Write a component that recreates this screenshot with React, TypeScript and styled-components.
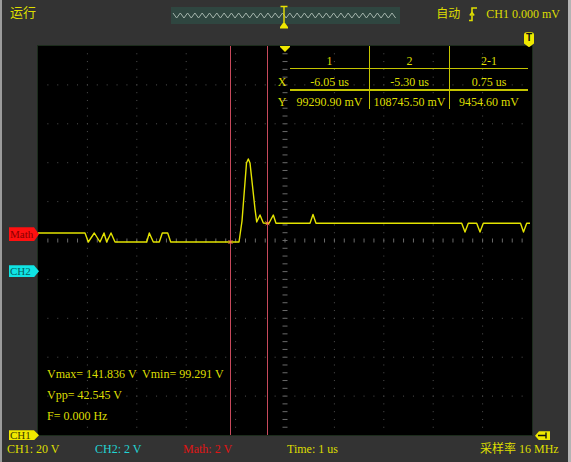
import React from 'react';
import styled, { createGlobalStyle } from 'styled-components';

const YELLOW = '#dede00';
const LINE_YELLOW = '#c4c400';
const CYAN = '#22d4d4';
const RED = '#e01414';
const SERIF = `'Liberation Serif', 'Noto Sans CJK SC', serif`;

const GlobalStyle = createGlobalStyle`
  html, body {
    margin: 0;
    padding: 0;
    background: #333333;
  }
`;

const Frame = styled.div`
  box-sizing: border-box;
  width: 571px;
  height: 462px;
  display: flex;
  flex-direction: column;
  background: #333333;
  border-left: 2px solid #9c9c9c;
  border-right: 3px solid #b4b4b4;
  font-family: ${SERIF};
  font-size: 12px;
  overflow: hidden;
`;

const TopBar = styled.div`
  height: 28px;
  display: grid;
  grid-template-columns: 169px 229px 1fr;
  align-items: start;
`;

const RunState = styled.div`
  padding: 5px 0 0 8px;
  font-size: 13px;
  line-height: 15px;
  color: ${YELLOW};
`;

const TimebaseStrip = styled.div`
  position: relative;
  margin-top: 7px;
  height: 17px;
  background: #2f4640;
`;

const StripMarker = styled.svg`
  position: absolute;
  left: 108px;
  top: -1px;
  overflow: visible;
`;

const TriggerInfo = styled.div`
  display: flex;
  justify-content: flex-end;
  align-items: center;
  gap: 8px;
  padding: 6px 8px 0 0;
  line-height: 14px;
  color: ${YELLOW};
`;

const MarkerStrip = styled.div`
  height: 19px;
  display: flex;
  justify-content: flex-end;
  align-items: flex-end;
  padding-right: 34px;
`;

const TopTrigMarker = styled.div`
  width: 10px;
  height: 15px;
  margin-bottom: -1px;
  position: relative;
  z-index: 2;
  background: #f0e800;
  border-radius: 3px 3px 0 0;
  clip-path: polygon(0 0, 100% 0, 100% 75%, 50% 100%, 0 75%);
  color: #111;
  font-family: 'Liberation Sans', sans-serif;
  font-weight: bold;
  font-size: 10px;
  line-height: 12px;
  text-align: center;
`;

const Middle = styled.div`
  display: flex;
  height: 389px;
`;

const Gutter = styled.div`
  position: relative;
  width: 36px;
  flex: none;
`;

const Tag = styled.div<{ $bg: string; $fg: string; $top: number; $h: number }>`
  position: absolute;
  left: 7px;
  top: ${(p) => p.$top}px;
  width: 29px;
  height: ${(p) => p.$h}px;
  background: ${(p) => p.$bg};
  color: ${(p) => p.$fg};
  clip-path: polygon(0 0, calc(100% - 5px) 0, 100% 50%, calc(100% - 5px) 100%, 0 100%);
  font-size: 11px;
  line-height: ${(p) => p.$h}px;
  padding-left: 1px;
  z-index: 2;
`;

const LevelMarker = styled.div`
  position: absolute;
  left: 3px;
  top: 385px;
  width: 15px;
  height: 9px;
  background: #f0e800;
  clip-path: polygon(4px 0, 100% 0, 100% 100%, 4px 100%, 0 50%);
  display: flex;
  align-items: center;
  justify-content: center;
  z-index: 2;
`;

const Screen = styled.div`
  position: relative;
  width: 494px;
  height: 389px;
  flex: none;
  background: #000;
  box-shadow: 0 0 0 1px #1c2c1c;
`;

const ScreenSvg = styled.svg`
  position: absolute;
  inset: 0;
  display: block;
`;

const CursorTable = styled.div`
  position: absolute;
  left: 236px;
  top: 0;
  display: grid;
  grid-template-columns: 16px 79px 80px 79px;
  grid-template-rows: 22px 21px 20px;
  color: ${YELLOW};
  line-height: 14px;
`;

const Cell = styled.div<{ $top?: number; $divider?: boolean }>`
  display: flex;
  align-items: flex-end;
  justify-content: center;
  white-space: nowrap;
  border-top: ${(p) => (p.$top ? `${p.$top}px solid ${LINE_YELLOW}` : 'none')};
  border-left: ${(p) => (p.$divider ? `1px solid ${LINE_YELLOW}` : 'none')};
`;

const Measurements = styled.div`
  position: absolute;
  left: 9px;
  bottom: 8px;
  color: ${YELLOW};
  line-height: 21px;
  white-space: pre;
`;

const StatusBar = styled.div`
  height: 26px;
  display: flex;
  align-items: center;
  padding: 0 8px 0 5px;
  line-height: 14px;
  margin-top: 1px;
`;

const StatusItem = styled.div<{ $color: string; $w?: number }>`
  color: ${(p) => p.$color};
  width: ${(p) => (p.$w ? `${p.$w}px` : 'auto')};
  flex: ${(p) => (p.$w ? 'none' : '1')};
  white-space: nowrap;
`;

const W = 494;
const H = 389;
const OX = 38;
const OY = 47;

const wavePage: [number, number][] = [
  [38, 234], [85, 234], [88.3, 243], [94.3, 234], [100, 243], [104, 234], [106.7, 243],
  [111, 234], [115, 243], [146.7, 243], [149.3, 234], [153.3, 243], [159.3, 243],
  [162.3, 234], [167.7, 234], [170.7, 243], [239, 243], [242, 222], [246.5, 164],
  [248.3, 160], [250, 164], [255, 210], [256.7, 223], [260, 216], [263.3, 224],
  [269, 224.3], [273.3, 216], [276, 224.3], [310, 224.3], [313, 215.5], [316, 224.3],
  [461.7, 224.3], [465, 233], [468.3, 224.3], [476.7, 224.3], [480, 233], [483.3, 224.3],
  [520.5, 224.3], [523.5, 233], [526.7, 224.3], [530, 224.3],
];

const wave = wavePage.map(([x, y]) => `${x - OX},${y - OY}`).join(' ');

const Graticule = () => {
  const dx = W / 10;
  const dy = H / 10;
  const items: React.ReactElement[] = [];
  for (let i = 1; i < 10; i++) {
    const x = i * dx;
    for (let j = 1; j < 50; j++) {
      const y = (j * dy) / 5;
      if (i === 5) {
        items.push(<rect key={`vt${j}`} x={x - 2.5} y={y - 0.5} width={5} height={1} fill="#6a6a6a" />);
      } else {
        items.push(<rect key={`v${i}-${j}`} x={x - 0.5} y={y - 0.5} width={1} height={1} fill="#505050" />);
      }
    }
  }
  for (let i = 1; i < 10; i++) {
    const y = i * dy;
    for (let j = 1; j < 50; j++) {
      const x = (j * dx) / 5;
      if (i === 5) {
        items.push(<rect key={`ht${j}`} x={x - 0.5} y={y - 2} width={1} height={4} fill="#6a6a6a" />);
      } else {
        items.push(<rect key={`h${i}-${j}`} x={x - 0.5} y={y - 0.5} width={1} height={1} fill="#505050" />);
      }
    }
  }
  return <g>{items}</g>;
};

const Cross = ({ x, y }: { x: number; y: number }) => (
  <path
    d={`M${x - 2} ${y - 2} L${x + 2} ${y + 2} M${x + 2} ${y - 2} L${x - 2} ${y + 2}`}
    stroke="#ff7050"
    strokeWidth={1}
  />
);

const Zigzag = () => {
  const pts: string[] = [];
  let k = 0;
  for (let x = 2; x <= 227; x += 3.65) {
    pts.push(`${x},${k % 2 === 0 ? 6 : 11}`);
    k++;
  }
  return (
    <svg width={229} height={17} style={{ display: 'block' }}>
      <polyline points={pts.join(' ')} fill="none" stroke="#a4b4ac" strokeWidth={1} />
    </svg>
  );
};

const EdgeIcon = () => (
  <svg width={10} height={16} viewBox="0 0 10 16">
    <path d="M1 14.5 H4 V2 H9" fill="none" stroke={YELLOW} strokeWidth={1.6} />
    <path d="M1.8 9.5 L4 6.5 L6.2 9.5" fill="none" stroke={YELLOW} strokeWidth={1.4} />
  </svg>
);

const App = () => {
  return (
    <>
      <GlobalStyle />
      <Frame>
        <TopBar>
          <RunState>运行</RunState>
          <TimebaseStrip>
            <Zigzag />
            <StripMarker width={10} height={23}>
              <path d="M1.5 0.5 H8.5 M5 0.5 V16" stroke="#e8e000" strokeWidth={1.4} fill="none" />
              <polygon points="5,15.5 9,21 9,22.5 1,22.5 1,21" fill="#f0e800" />
            </StripMarker>
          </TimebaseStrip>
          <TriggerInfo>
            <span>自动</span>
            <EdgeIcon />
            <span>CH1 0.000 mV</span>
          </TriggerInfo>
        </TopBar>

        <MarkerStrip>
          <TopTrigMarker>T</TopTrigMarker>
        </MarkerStrip>

        <Middle>
          <Gutter>
            <Tag $bg="#ff1010" $fg="#8a0000" $top={181} $h={14}>Math</Tag>
            <Tag $bg="#10e4e4" $fg="#046060" $top={219} $h={12}>CH2</Tag>
            <Tag $bg="#f0e800" $fg="#3a3a00" $top={384} $h={10}>CH1</Tag>
          </Gutter>

          <Screen>
            <ScreenSvg width={W} height={H} viewBox={`0 0 ${W} ${H}`}>
              <Graticule />
              <line x1={192.5} y1={0} x2={192.5} y2={H} stroke="#c84a5c" strokeWidth={1} />
              <line x1={229.5} y1={0} x2={229.5} y2={H} stroke="#c84a5c" strokeWidth={1} />
              <polyline points={wave} fill="none" stroke="#e4e400" strokeWidth={1.4} strokeLinejoin="round" />
              <Cross x={192.5} y={196} />
              <Cross x={229.5} y={177.3} />
              <polygon points="242,0 252,0 252,1 247,6 242,1" fill="#f0e800" />
            </ScreenSvg>

            <CursorTable>
              <Cell />
              <Cell>1</Cell>
              <Cell $divider>2</Cell>
              <Cell $divider>2-1</Cell>

              <Cell>X</Cell>
              <Cell $top={1}>-6.05 us</Cell>
              <Cell $top={1} $divider>-5.30 us</Cell>
              <Cell $top={1} $divider>0.75 us</Cell>

              <Cell>Y</Cell>
              <Cell $top={2}>99290.90 mV</Cell>
              <Cell $top={2} $divider>108745.50 mV</Cell>
              <Cell $top={2} $divider>9454.60 mV</Cell>
            </CursorTable>

            <Measurements>
              <div>{'Vmax= 141.836 V  Vmin= 99.291 V'}</div>
              <div>Vpp= 42.545 V</div>
              <div>F= 0.000 Hz</div>
            </Measurements>
          </Screen>

          <Gutter>
            <LevelMarker>
              <svg width={9} height={7} viewBox="0 0 9 7">
                <path d="M0 3.5 H8 M8 0.5 V6.5" stroke="#111" strokeWidth={1.4} fill="none" />
              </svg>
            </LevelMarker>
          </Gutter>
        </Middle>

        <StatusBar>
          <StatusItem $color={YELLOW} $w={88}>CH1: 20 V</StatusItem>
          <StatusItem $color={CYAN} $w={88}>CH2: 2 V</StatusItem>
          <StatusItem $color={RED} $w={104}>Math: 2 V</StatusItem>
          <StatusItem $color={YELLOW}>Time: 1 us</StatusItem>
          <StatusItem $color={YELLOW} $w={80}>采样率 16 MHz</StatusItem>
        </StatusBar>
      </Frame>
    </>
  );
};

export default App;
